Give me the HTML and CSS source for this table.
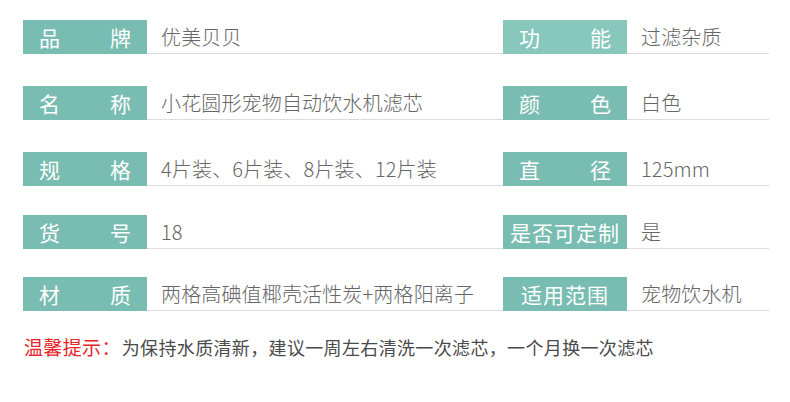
FILE: index.html
```html
<!DOCTYPE html>
<html lang="zh-CN">
<head>
<meta charset="utf-8">
<title>产品参数</title>
<link rel="stylesheet" href="styles.css">
</head>
<body>
<div class="page">
  <div class="table">
    <div class="row r1">
      <div class="cell left">
        <div class="label"><span>品</span><span>牌</span></div>
        <div class="value">优美贝贝</div>
      </div>
      <div class="cell right">
        <div class="label light"><span>功</span><span>能</span></div>
        <div class="value">过滤杂质</div>
      </div>
    </div>
    <div class="row r2">
      <div class="cell left">
        <div class="label"><span>名</span><span>称</span></div>
        <div class="value">小花圆形宠物自动饮水机滤芯</div>
      </div>
      <div class="cell right">
        <div class="label"><span>颜</span><span>色</span></div>
        <div class="value">白色</div>
      </div>
    </div>
    <div class="row r3">
      <div class="cell left">
        <div class="label"><span>规</span><span>格</span></div>
        <div class="value">4片装、6片装、8片装、12片装</div>
      </div>
      <div class="cell right">
        <div class="label"><span>直</span><span>径</span></div>
        <div class="value">125mm</div>
      </div>
    </div>
    <div class="row r4">
      <div class="cell left">
        <div class="label"><span>货</span><span>号</span></div>
        <div class="value">18</div>
      </div>
      <div class="cell right">
        <div class="label wide">是否可定制</div>
        <div class="value">是</div>
      </div>
    </div>
    <div class="row r5">
      <div class="cell left">
        <div class="label"><span>材</span><span>质</span></div>
        <div class="value">两格高碘值椰壳活性炭+两格阳离子</div>
      </div>
      <div class="cell right">
        <div class="label wide">适用范围</div>
        <div class="value">宠物饮水机</div>
      </div>
    </div>
  </div>
  <p class="tip"><span class="tip-title">温馨提示：</span>为保持水质清新，建议一周左右清洗一次滤芯，一个月换一次滤芯</p>
</div>
</body>
</html>
```
FILE: styles.css
```css
html, body {
  margin: 0;
  padding: 0;
  background: #ffffff;
}
body {
  font-family: "Noto Sans CJK SC", "Noto Sans", sans-serif;
}
.page {
  width: 790px;
  height: 402px;
  padding: 20px 0 0 23px;
  box-sizing: border-box;
}
.table {
  display: flex;
  flex-direction: column;
}
.row {
  display: flex;
  height: 34px;
}
.r2 { margin-top: 32px; }
.r3 { margin-top: 32px; }
.r4 { margin-top: 29px; }
.r5 { margin-top: 28px; }
.cell {
  display: flex;
  height: 34px;
}
.left { width: 480px; }
.right { width: 266px; }
.label {
  width: 124px;
  flex: none;
  height: 34px;
  box-sizing: border-box;
  padding: 0 16px;
  background: #79bcb1;
  color: #ffffff;
  font-size: 21px;
  line-height: 34px;
  display: flex;
  justify-content: space-between;
}
.label.light {
  background: #88c7bc;
}
.label.wide {
  justify-content: center;
  padding: 0;
  letter-spacing: 1px;
}
.value {
  flex: 1;
  box-sizing: border-box;
  height: 34px;
  padding-left: 14px;
  border-bottom: 1px solid #dcdcdc;
  color: #666666;
  font-size: 20px;
  font-weight: 300;
  line-height: 34px;
  letter-spacing: 0.15px;
  white-space: nowrap;
}
.tip {
  margin: 23px 0 0 1px;
  font-size: 18px;
  line-height: 26px;
  letter-spacing: 0.35px;
  color: #4a4a4a;
  white-space: nowrap;
}
.tip-title {
  color: #e8242a;
  font-size: 19px;
  margin-right: 1px;
}
```
